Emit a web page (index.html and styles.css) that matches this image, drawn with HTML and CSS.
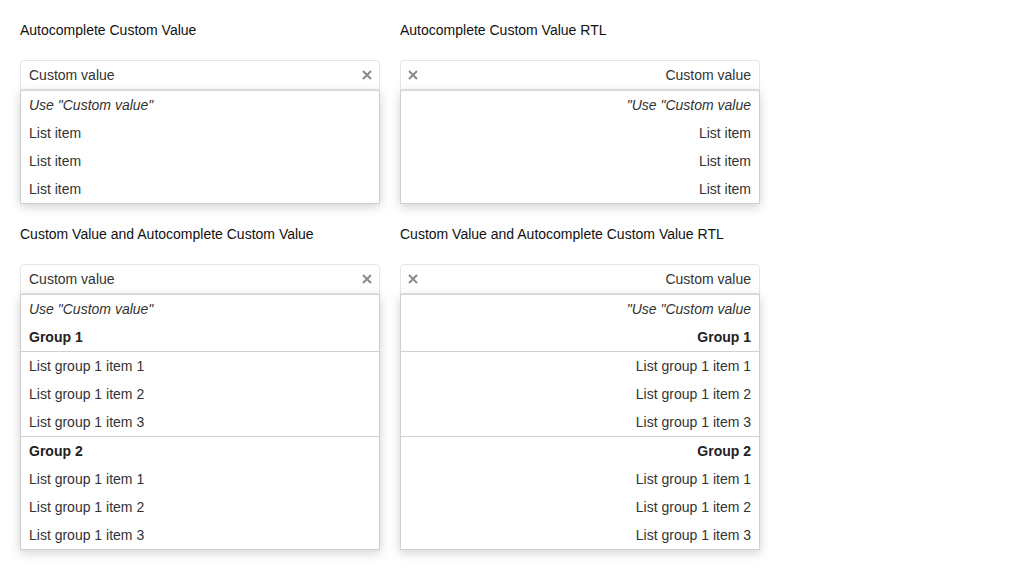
FILE: index.html
```html
<!DOCTYPE html>
<html>
<head>
<meta charset="utf-8">
<link rel="stylesheet" href="styles.css">
</head>
<body>
<div class="page">
  <section class="demo">
    <div class="title">Autocomplete Custom Value</div>
    <div class="combo">
      <div class="field"><span class="value">Custom value</span><svg class="clear" viewBox="0 0 10 10" width="10" height="10"><path d="M1 1L9 9M9 1L1 9"/></svg></div>
      <ul class="menu">
        <li class="item custom">Use "Custom value"</li>
        <li class="item">List item</li>
        <li class="item">List item</li>
        <li class="item">List item</li>
      </ul>
    </div>
  </section>
  <section class="demo rtl">
    <div class="title">Autocomplete Custom Value RTL</div>
    <div class="combo">
      <div class="field"><span class="value">Custom value</span><svg class="clear" viewBox="0 0 10 10" width="10" height="10"><path d="M1 1L9 9M9 1L1 9"/></svg></div>
      <ul class="menu">
        <li class="item custom">Use "Custom value"</li>
        <li class="item">List item</li>
        <li class="item">List item</li>
        <li class="item">List item</li>
      </ul>
    </div>
  </section>
  <section class="demo">
    <div class="title">Custom Value and Autocomplete Custom Value</div>
    <div class="combo">
      <div class="field"><span class="value">Custom value</span><svg class="clear" viewBox="0 0 10 10" width="10" height="10"><path d="M1 1L9 9M9 1L1 9"/></svg></div>
      <ul class="menu">
        <li class="item custom">Use "Custom value"</li>
        <li class="group">
          <div class="item header">Group 1</div>
          <ul class="group-list">
            <li class="item">List group 1 item 1</li>
            <li class="item">List group 1 item 2</li>
            <li class="item">List group 1 item 3</li>
          </ul>
        </li>
        <li class="group">
          <div class="item header">Group 2</div>
          <ul class="group-list">
            <li class="item">List group 1 item 1</li>
            <li class="item">List group 1 item 2</li>
            <li class="item">List group 1 item 3</li>
          </ul>
        </li>
      </ul>
    </div>
  </section>
  <section class="demo rtl">
    <div class="title">Custom Value and Autocomplete Custom Value RTL</div>
    <div class="combo">
      <div class="field"><span class="value">Custom value</span><svg class="clear" viewBox="0 0 10 10" width="10" height="10"><path d="M1 1L9 9M9 1L1 9"/></svg></div>
      <ul class="menu">
        <li class="item custom">Use "Custom value"</li>
        <li class="group">
          <div class="item header">Group 1</div>
          <ul class="group-list">
            <li class="item">List group 1 item 1</li>
            <li class="item">List group 1 item 2</li>
            <li class="item">List group 1 item 3</li>
          </ul>
        </li>
        <li class="group">
          <div class="item header">Group 2</div>
          <ul class="group-list">
            <li class="item">List group 1 item 1</li>
            <li class="item">List group 1 item 2</li>
            <li class="item">List group 1 item 3</li>
          </ul>
        </li>
      </ul>
    </div>
  </section>
</div>
</body>
</html>
```

FILE: styles.css
```css
html, body {
  margin: 0;
  padding: 0;
  background: #fff;
}
body {
  font-family: "Liberation Sans", Arial, sans-serif;
  font-size: 14px;
  color: #333;
}
.page {
  display: grid;
  grid-template-columns: 360px 360px;
  column-gap: 20px;
  row-gap: 20px;
  padding: 20px;
  align-items: start;
}
.title {
  height: 20px;
  line-height: 20px;
  color: #111;
  margin-bottom: 20px;
}
.combo {
  width: 360px;
}
.field {
  box-sizing: border-box;
  height: 30px;
  border: 1px solid #e6e6e6;
  border-radius: 4px 4px 0 0;
  display: flex;
  align-items: center;
  justify-content: space-between;
  padding: 0 7px 0 8px;
  background: #fff;
  box-shadow: 0 1px 2px rgba(0,0,0,0.06);
}
.value {
  line-height: 28px;
  color: #333;
}
.clear {
  display: block;
  width: 10px;
  height: 10px;
  fill: none;
  stroke: #8a8a8a;
  stroke-width: 2;
}
.rtl .field {
  flex-direction: row-reverse;
  padding: 0 8px 0 7px;
}
.menu {
  list-style: none;
  margin: 0;
  padding: 0;
  border: 1px solid #cfcfcf;
  border-top-color: #d6d6d6;
  background: #fff;
  box-shadow: 0 3px 10px rgba(0,0,0,0.18);
}
.group-list {
  list-style: none;
  margin: 0;
  padding: 0;
}
.item {
  height: 28px;
  line-height: 28px;
  padding: 0 8px;
  color: #333;
  white-space: nowrap;
}
.custom {
  font-style: italic;
}
.header {
  font-weight: bold;
  color: #222;
}
.custom + .group .header {
  border-bottom: 1px solid #cfcfcf;
}
.group + .group {
  border-top: 1px solid #cfcfcf;
}
.rtl .menu {
  direction: rtl;
}
.rtl .item {
  text-align: right;
}
```
